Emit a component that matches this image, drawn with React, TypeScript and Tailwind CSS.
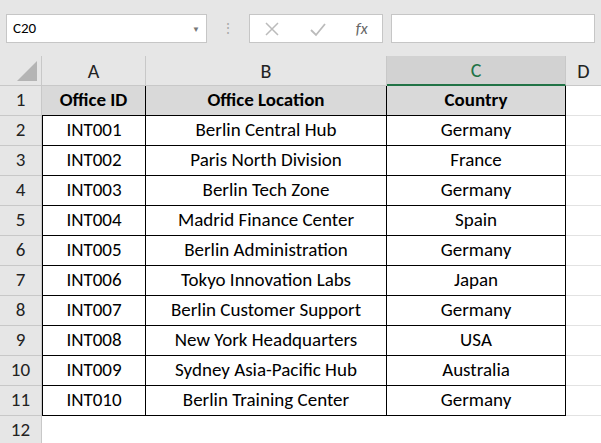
const rows = [
  ["INT001", "Berlin Central Hub", "Germany"],
  ["INT002", "Paris North Division", "France"],
  ["INT003", "Berlin Tech Zone", "Germany"],
  ["INT004", "Madrid Finance Center", "Spain"],
  ["INT005", "Berlin Administration", "Germany"],
  ["INT006", "Tokyo Innovation Labs", "Japan"],
  ["INT007", "Berlin Customer Support", "Germany"],
  ["INT008", "New York Headquarters", "USA"],
  ["INT009", "Sydney Asia-Pacific Hub", "Australia"],
  ["INT010", "Berlin Training Center", "Germany"],
];

const cols = "grid-cols-[42px_104px_241px_179px_35px]";

function RowNum({ n }: { n: number }) {
  return (
    <div className="h-[30px] bg-[#e6e6e6] border-b border-r border-[#c8c8c8] flex items-center justify-center text-[19px] text-[#222]">
      {n}
    </div>
  );
}

export default function App() {
  return (
    <div className="w-[601px] h-[443px] overflow-hidden bg-white font-['Calibri','Carlito','Liberation_Sans',sans-serif]" style={{ fontFamily: "Carlito, 'Liberation Sans', sans-serif" }}>
      <div className="h-[56px] bg-[#e6e6e6] flex items-center gap-2 px-[6px] pt-[1px]">
        <div className="w-[201px] h-[29px] bg-white border border-[#c6c6c6] flex items-center justify-between px-[6px] text-[15px]">
          <span>C20</span>
          <span className="text-[8px] text-[#777]">▼</span>
        </div>
        <span className="text-[#aaa] text-[14px] leading-none mx-[6px]">⋮</span>
        <div className="w-[134px] h-[29px] bg-white border border-[#c6c6c6] flex items-center justify-around text-[#bbb]">
          <svg width="16" height="16" viewBox="0 0 16 16"><path d="M2 2L14 14M14 2L2 14" stroke="#bbb" strokeWidth="1.5" /></svg>
          <svg width="18" height="16" viewBox="0 0 18 16"><path d="M2 9L7 14L16 3" stroke="#bbb" strokeWidth="1.8" fill="none" /></svg>
          <span className="italic text-[#666] text-[16px] font-['Liberation_Serif',serif]">fx</span>
        </div>
        <div className="flex-1 h-[29px] bg-white border border-[#c6c6c6]" />
      </div>
      <div className={`grid ${cols}`}>
        <div className="h-[30px] bg-[#e6e6e6] border-b border-r border-[#c8c8c8] relative">
          <div className="absolute right-[4px] bottom-[4px] w-0 h-0 border-l-[20px] border-l-transparent border-b-[20px] border-b-[#b4b4b4]" />
        </div>
        {["A", "B"].map((c) => (
          <div key={c} className="h-[30px] bg-[#e6e6e6] border-b border-r border-[#c8c8c8] flex items-center justify-center text-[20px] text-[#222]">{c}</div>
        ))}
        <div className="h-[30px] bg-[#d2d2d2] border-b-2 border-b-[#217346] border-r border-[#c8c8c8] flex items-center justify-center text-[20px] text-[#217346]">C</div>
        <div className="h-[30px] bg-[#e6e6e6] border-b border-[#c8c8c8] flex items-center justify-center text-[20px] text-[#222]">D</div>

        <RowNum n={1} />
        {["Office ID", "Office Location", "Country"].map((h) => (
          <div key={h} className="h-[30px] bg-[#d9d9d9] border-b border-r border-black flex items-center justify-center font-bold text-[19px] text-black">{h}</div>
        ))}
        <div className="h-[30px] border-b border-[#e2e2e2]" />

        {rows.map((r, i) => (
          <div key={r[0]} className="contents">
            <RowNum n={i + 2} />
            {r.map((v, j) => (
              <div key={j} className={`h-[30px] border-b border-r border-black flex items-center justify-center text-[19px] text-black ${j === 0 ? "border-l" : ""}`}>{v}</div>
            ))}
            <div className="h-[30px] border-b border-[#e2e2e2]" />
          </div>
        ))}
        <RowNum n={12} />
        <div className="col-span-4 h-[30px]" />
      </div>
    </div>
  );
}
